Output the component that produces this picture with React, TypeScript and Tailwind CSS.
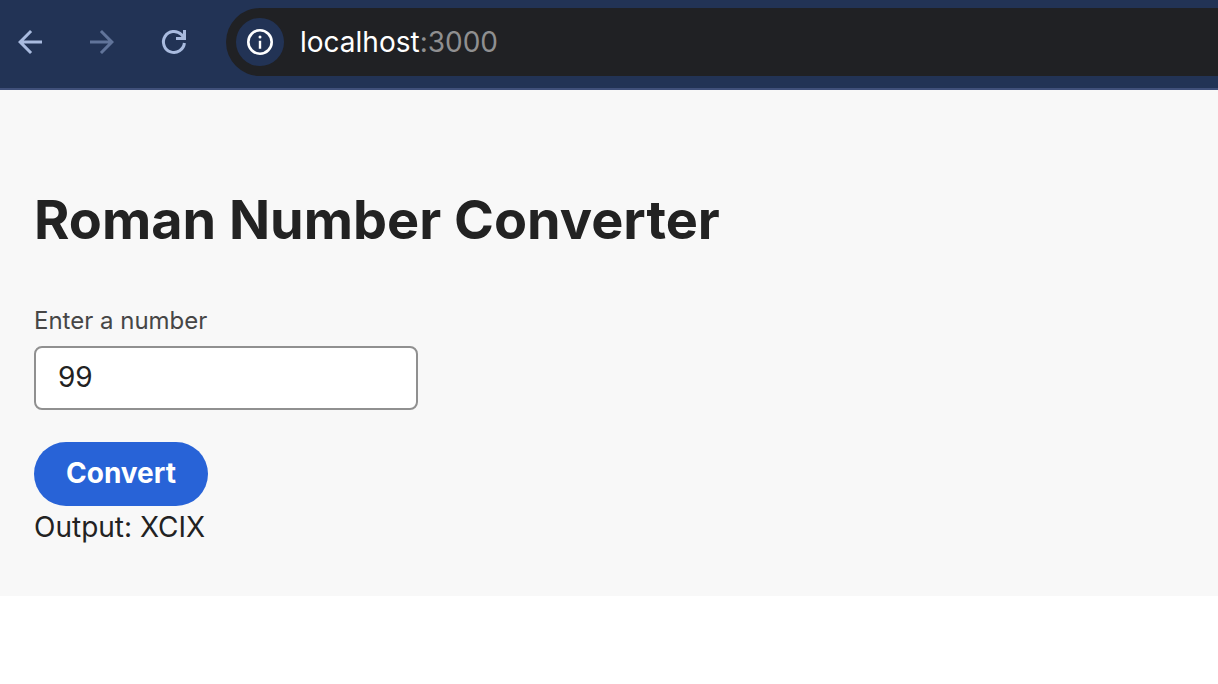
import { useState, type FormEvent } from "react";

const NUMERALS: [number, string][] = [
  [1000, "M"], [900, "CM"], [500, "D"], [400, "CD"],
  [100, "C"], [90, "XC"], [50, "L"], [40, "XL"],
  [10, "X"], [9, "IX"], [5, "V"], [4, "IV"], [1, "I"],
];

function toRoman(value: number): string {
  let rest = value;
  let result = "";
  for (const [amount, symbol] of NUMERALS) {
    while (rest >= amount) {
      result += symbol;
      rest -= amount;
    }
  }
  return result;
}

function BackIcon() {
  return (
    <svg viewBox="0 0 24 24" className="size-9" fill="currentColor" aria-hidden="true">
      <path d="M20 11H7.83l5.59-5.59L12 4l-8 8 8 8 1.41-1.41L7.83 13H20v-2z" />
    </svg>
  );
}

function ForwardIcon() {
  return (
    <svg viewBox="0 0 24 24" className="size-9" fill="currentColor" aria-hidden="true">
      <path d="M4 11h12.17l-5.59-5.59L12 4l8 8-8 8-1.41-1.41L16.17 13H4v-2z" />
    </svg>
  );
}

function ReloadIcon() {
  return (
    <svg viewBox="0 0 36 36" className="size-9" fill="none" stroke="currentColor" strokeWidth="3" aria-hidden="true">
      <path d="M28.4 19A10.5 10.5 0 1 1 25.4 10.5L27.5 13" />
      <path d="M28.5 6v8.5H20" />
      <path d="M24 15l5-5v5z" fill="currentColor" stroke="none" />
    </svg>
  );
}

function InfoIcon() {
  return (
    <svg viewBox="0 0 28 28" className="size-7" aria-hidden="true">
      <circle cx="14" cy="14" r="11.7" fill="none" stroke="currentColor" strokeWidth="2.6" />
      <circle cx="14" cy="9" r="1.5" fill="currentColor" />
      <path d="M12.8 12.8h2.4v8h-2.4z" fill="currentColor" />
    </svg>
  );
}

function BrowserBar() {
  return (
    <header className="flex items-center gap-[34px] border-b-2 border-[#40507a] bg-[#223355] pt-2 pb-3 pl-3 text-[#a9bbdf]">
      <nav className="flex gap-9" aria-label="Browser">
        <button type="button" aria-label="Back"><BackIcon /></button>
        <button type="button" aria-label="Forward" disabled className="text-[#61749a]"><ForwardIcon /></button>
        <button type="button" aria-label="Reload"><ReloadIcon /></button>
      </nav>
      <div className="flex flex-1 items-center gap-4 rounded-l-full bg-[#202124] py-[10px] pl-[10px]">
        <button type="button" aria-label="View site information" className="grid size-12 place-items-center rounded-full bg-[#223355] text-white">
          <InfoIcon />
        </button>
        <p className="text-[28px] leading-9 text-white">
          localhost<span className="text-[#8f8f90]">:3000</span>
        </p>
      </div>
    </header>
  );
}

export default function App() {
  const [value, setValue] = useState("99");
  const [output, setOutput] = useState("XCIX");

  function convert(event: FormEvent) {
    event.preventDefault();
    setOutput(toRoman(Number(value)));
  }

  return (
    <div className="min-h-screen bg-white font-['Inter',sans-serif] text-[#222222]">
      <BrowserBar />
      <main className="bg-[#f8f8f8] px-[34px] pt-24 pb-12">
        <h1 className="text-[54px] leading-[68px] font-bold">Roman Number Converter</h1>
        <form onSubmit={convert} className="mt-12 flex flex-col items-start">
          <label htmlFor="number" className="text-2xl leading-[38px] text-[#464646]">Enter a number</label>
          <input
            id="number"
            type="text"
            inputMode="numeric"
            value={value}
            onChange={(event) => setValue(event.target.value)}
            className="mt-[6px] h-16 w-96 rounded-lg border-2 border-[#909090] bg-white px-[22px] pb-0.5 text-[28px]"
          />
          <button type="submit" className="mt-8 h-16 rounded-full bg-[#2863d7] px-8 pb-0.5 text-[28px] font-bold text-white">
            Convert
          </button>
        </form>
        <p className="text-[28px] leading-[42px]">Output: {output}</p>
      </main>
    </div>
  );
}
